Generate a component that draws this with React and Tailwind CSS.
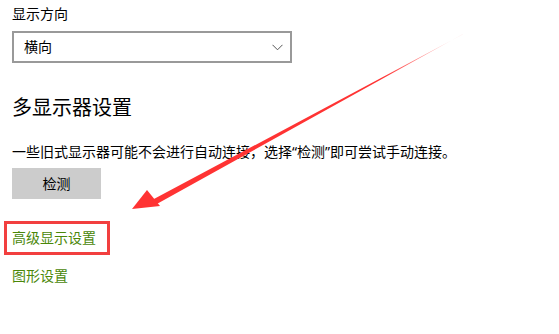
import React from "react";

export default function App() {
  return (
    <div
      className="relative w-[559px] h-[334px] bg-white overflow-hidden text-[#000]"
      style={{ fontFamily: '"Noto Sans", "Noto Sans CJK SC", sans-serif' }}
    >
      <div className="flex flex-col pl-[12px] pt-[3px]">
        <div className="text-[14px] leading-[22px] h-[22px]">显示方向</div>
        <div className="mt-[6px] w-[280px] h-[32px] border-2 border-[#999999] flex items-center justify-between pl-[10px] pr-[7px]">
          <span className="text-[14px] leading-[20px]">横向</span>
          <svg width="11" height="7" viewBox="0 0 11 7">
            <path d="M0.5 0.8 L5.5 5.8 L10.5 0.8" fill="none" stroke="#555" strokeWidth="1" />
          </svg>
        </div>
        <div className="mt-[31px] text-[20px] leading-[28px] h-[28px]">多显示器设置</div>
        <div className="mt-[20px] text-[14px] leading-[20px] h-[20px] whitespace-nowrap">
          一些旧式显示器可能不会进行自动连接，选择“检测”即可尝试手动连接。
        </div>
        <div className="mt-[6px] w-[89px] h-[31px] bg-[#cccccc] flex items-center justify-center text-[14px]">
          检测
        </div>
        <div className="mt-[22px] -ml-[8px] w-[106px] h-[34px] border-[3px] border-[#f23f3f] flex items-center pl-[5px]">
          <span className="text-[14px] leading-[20px] text-[#4a8708]">高级显示设置</span>
        </div>
        <div className="mt-[11px] text-[14px] leading-[20px] text-[#4a8708]">图形设置</div>
      </div>
      <svg
        className="absolute left-0 top-0 pointer-events-none"
        width="559"
        height="334"
        viewBox="0 0 559 334"
      >
        <defs>
          <linearGradient id="g" x1="463" y1="34" x2="140" y2="204" gradientUnits="userSpaceOnUse">
            <stop offset="0" stopColor="#ff4a4a" stopOpacity="0.2" />
            <stop offset="0.25" stopColor="#f33" stopOpacity="1" />
            <stop offset="1" stopColor="#f33" />
          </linearGradient>
        </defs>
        <polygon points="463,34 462.5,34.5 152,200 155,205" fill="url(#g)" />
        <polygon points="132,209 147,190 160,206" fill="#f33" />
      </svg>
    </div>
  );
}
